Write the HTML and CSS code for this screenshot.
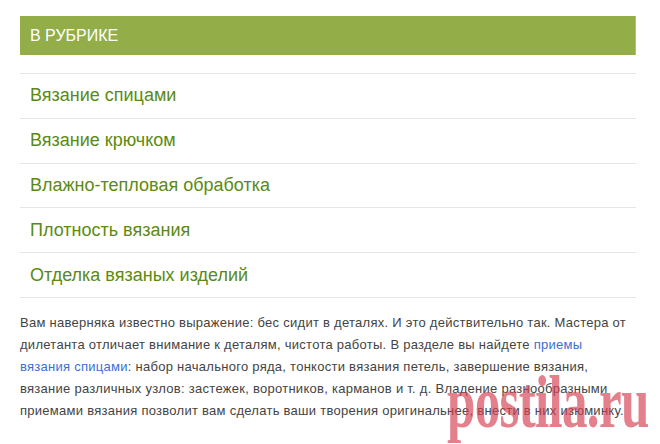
FILE: index.html
```html
<!DOCTYPE html>
<html lang="ru">
<head>
<meta charset="utf-8">
<link rel="stylesheet" href="styles.css">
</head>
<body>
<div class="page">
  <div class="widget">
    <div class="widget-title">В РУБРИКЕ</div>
    <ul class="rubrics">
      <li><a href="#">Вязание спицами</a></li>
      <li><a href="#">Вязание крючком</a></li>
      <li><a href="#">Влажно-тепловая обработка</a></li>
      <li><a href="#">Плотность вязания</a></li>
      <li><a href="#">Отделка вязаных изделий</a></li>
    </ul>
  </div>
  <p class="intro">Вам наверняка известно выражение: бес сидит в деталях. И это действительно так. Мастера от дилетанта отличает внимание к деталям, чистота работы. В разделе вы найдете <a href="#">приемы вязания спицами</a>: набор начального ряда, тонкости вязания петель, завершение вязания, вязание различных узлов: застежек, воротников, карманов и т. д. Владение разнообразными приемами вязания позволит вам сделать ваши творения оригинальнее, внести в них изюминку.</p>
</div>
<div class="watermark">postila.ru</div>
</body>
</html>
```
FILE: styles.css
```css
html, body {
  margin: 0;
  padding: 0;
  background: #ffffff;
  overflow: hidden;
}
body {
  font-family: "Liberation Sans", Arial, sans-serif;
  width: 660px;
  height: 444px;
  position: relative;
}
.page {
  padding: 16px 24px 0 20px;
}
.widget-title {
  background: #93ad48;
  border-right: 1px solid #a9c56a;
  color: #ffffff;
  font-size: 16px;
  height: 39px;
  line-height: 39px;
  padding-left: 10px;
}
.rubrics {
  list-style: none;
  margin: 18px 0 0 0;
  padding: 0;
  border-top: 1px solid #e6e6e6;
}
.rubrics li {
  border-bottom: 1px solid #e6e6e6;
  height: 43.8px;
  display: flex;
  align-items: center;
  padding-left: 10px;
}
.rubrics a {
  color: #5b8a12;
  font-size: 18px;
  text-decoration: none;
}
.intro {
  margin: 14px 0 0 0;
  font-size: 13px;
  letter-spacing: 0.27px;
  line-height: 22px;
  color: #444444;
}
.intro a {
  color: #3a6fd8;
  text-decoration: none;
}
.watermark {
  position: absolute;
  left: 447px;
  top: 362px;
  font-family: "Liberation Serif", "DejaVu Serif", serif;
  font-weight: bold;
  font-size: 74px;
  line-height: 80px;
  color: rgba(214, 62, 80, 0.66);
  transform: scaleX(0.69);
  transform-origin: left top;
  letter-spacing: -1px;
  white-space: nowrap;
}
```
